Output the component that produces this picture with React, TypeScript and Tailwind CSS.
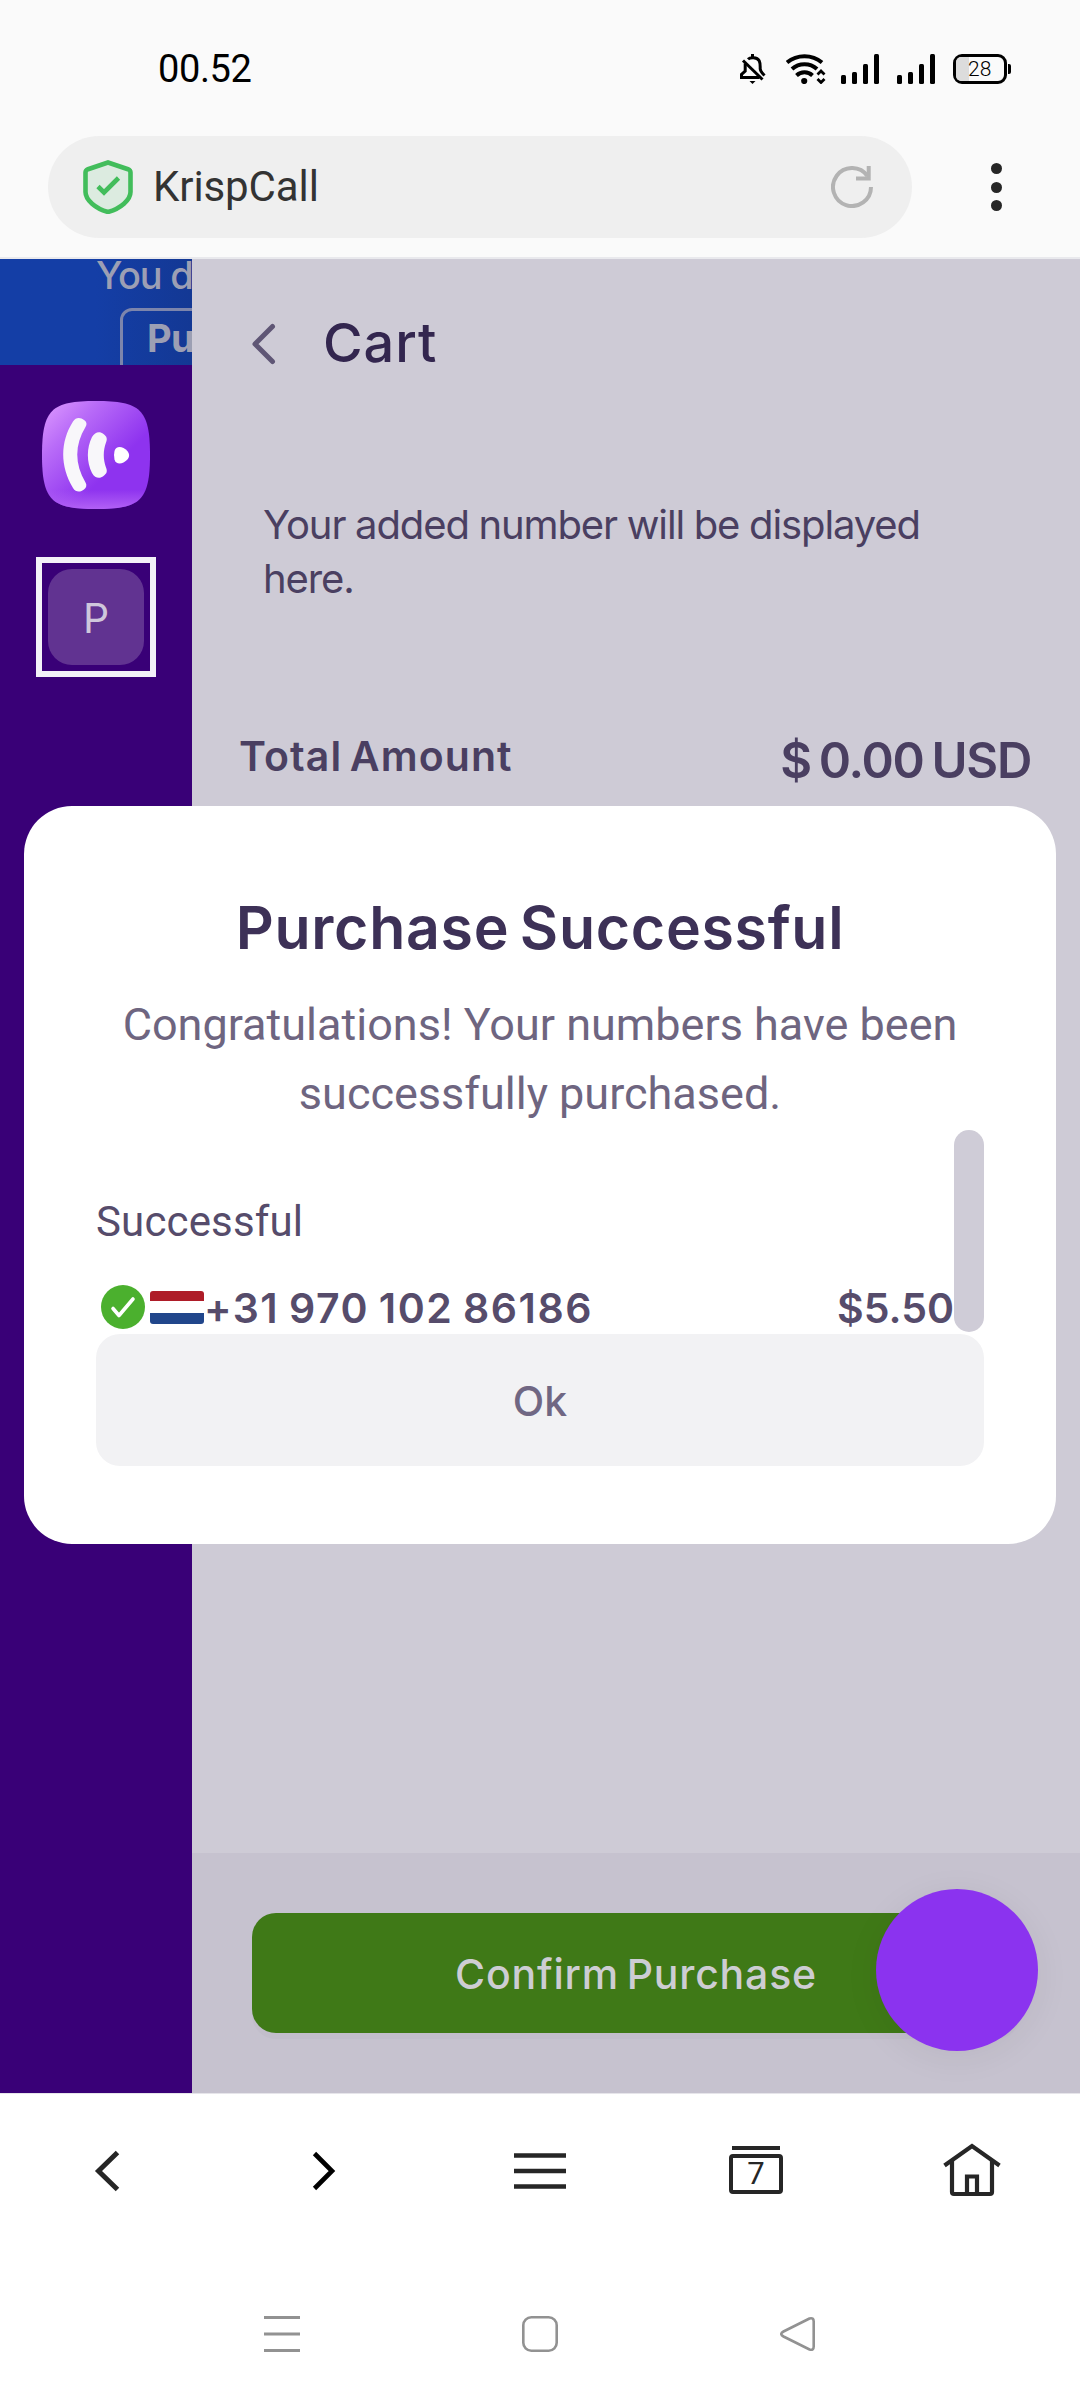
import React from 'react';

const SIGNAL_BARS = [
  { id: 1, className: 'h-[9px]' },
  { id: 2, className: 'h-[12px]' },
  { id: 3, className: 'h-[20px]' },
  { id: 4, className: 'h-[30px]' },
];

const PURCHASED = [{ id: 1, number: '+31 970 102 86186', price: '$5.50' }];

const Signal: React.FC = () => (
  <div className="flex h-[30px] items-end gap-[6px]">
    {SIGNAL_BARS.map((bar) => (
      <span key={bar.id} className={`w-[5px] rounded-[1.5px] bg-black ${bar.className}`} />
    ))}
  </div>
);

const StatusBar: React.FC = () => (
  <div className="flex h-[136px] items-center justify-between pt-[2px] pr-[69px] pl-[158px] font-['Roboto',sans-serif]">
    <span className="text-[38px] tracking-[-0.4px] text-black">00.52</span>
    <div className="flex items-center">
      {/* Muted bell */}
      <svg width="26" height="30" viewBox="0 0 26 30" fill="none" stroke="#000" strokeWidth="3">
        <path d="M3 6.5 22.5 25.5" />
        <path d="M8 5.2C10 3.2 17 2.6 19.2 6.8c1.2 2.4 1 5 1 8 0 2.4 1.3 3.6 4.3 6.7" />
        <path d="M5.2 9.5v7.5L1.5 20.5v3h18" />
        <path d="M12.5 0v4" />
        <path d="M9.5 27h6l-3 3z" fill="#000" stroke="none" />
      </svg>
      <svg className="ml-[20px]" width="40" height="30" viewBox="0 0 40 30" fill="none" stroke="#000" strokeWidth="4">
        <path d="M1 8.5C11 0 26 0 36 8.5" />
        <path d="M6 15C13 8.5 24 8.5 31 15" />
        <path d="M10.5 21.5c4.5-4.2 11.5-4.2 16 0" />
        <circle cx="18.2" cy="27" r="3.1" fill="#000" stroke="none" />
        <path d="m31.5 20.5 3.5-3.5 3.5 3.5M31.5 25l3.5 3.5 3.5-3.5" strokeWidth="2.8" />
      </svg>
      <div className="ml-[15px]"><Signal /></div>
      <div className="ml-[18px]"><Signal /></div>
      <div className="ml-[18px] flex h-[30px] w-[54px] items-center rounded-[9px] border-[3px] border-black">
        <span className="h-[24px] w-[13px] rounded-l-[5px] bg-[#dcdcdc]" />
        <span className="-ml-px text-[21px] leading-none font-light text-black">28</span>
      </div>
      <span className="ml-px h-[10px] w-[3px] rounded-r-[2px] bg-black" />
    </div>
  </div>
);

const AddressBar: React.FC = () => (
  <div className="flex h-[121px] items-start pl-[48px]">
    <div className="flex h-[102px] w-[864px] items-center rounded-full bg-[#efefef] pr-[39px] pl-[35px]">
      <svg width="50" height="54" viewBox="0 0 50 54" fill="none">
        <path
          d="M25 2.5 45 9.2q2.5 1 2.5 3.3V32c0 8-10 16.5-22.5 20C12.5 48.5 2.5 40 2.5 32V12.5q0-2.3 2.5-3.3z"
          fill="#dcebe0"
          stroke="#42bd5b"
          strokeWidth="4.6"
        />
        <path d="m15 26.5 6 6L35.5 18" stroke="#42bd5b" strokeWidth="4.6" />
      </svg>
      <span className="ml-[20px] font-['Roboto',sans-serif] text-[42px] leading-none tracking-[-0.1px] text-[#333]">KrispCall</span>
      <svg className="ml-auto" width="42" height="42" viewBox="0 0 42 42" fill="none" stroke="#b3b3b3" strokeWidth="4">
        <path d="M40 21A19 19 0 1 1 36.5 10" />
        <path d="M25 12.5h12.7V0" />
      </svg>
    </div>
    <div className="ml-[78.5px] flex h-[102px] flex-col items-center justify-center gap-[7.5px]">
      <span className="size-[11px] rounded-full bg-[#262626]" />
      <span className="size-[11px] rounded-full bg-[#262626]" />
      <span className="size-[11px] rounded-full bg-[#262626]" />
    </div>
  </div>
);

const Sidebar: React.FC = () => (
  <aside className="flex w-[192px] shrink-0 flex-col items-center bg-[#390077]">
    <div className="h-[106px] w-full overflow-hidden bg-linear-to-r from-[#143ea6] from-50% to-[#133894] whitespace-nowrap text-[#9c9fb4]">
      <p className="pl-[96px] text-[38px] leading-8 font-medium tracking-[-1.2px]">You d</p>
      <div className="mt-[17px] ml-[120px] h-[70px] w-[200px] rounded-[12px] border-[3px] border-[#7c85ac] pl-[24px] text-[38px] leading-[54px] font-bold tracking-[-0.5px]">
        Pu
      </div>
    </div>
    <svg className="mt-[36px]" width="108" height="108" viewBox="0 0 108 108">
      <defs>
        <linearGradient id="tile" x1="0" y1="0" x2="0.75" y2="0.75">
          <stop offset="0" stopColor="#e09dff" />
          <stop offset="0.35" stopColor="#b96cf8" />
          <stop offset="0.85" stopColor="#8e33ef" />
        </linearGradient>
        <linearGradient id="glow" x1="0" y1="0" x2="0" y2="1">
          <stop offset="0.82" stopColor="#b565f5" stopOpacity="0" />
          <stop offset="1" stopColor="#b565f5" stopOpacity="0.9" />
        </linearGradient>
      </defs>
      <path d="M54 0C98 0 108 8 108 54s-10 54-54 54S0 100 0 54 10 0 54 0z" fill="url(#tile)" />
      <path d="M54 0C98 0 108 8 108 54s-10 54-54 54S0 100 0 54 10 0 54 0z" fill="url(#glow)" />
      <path
        d="M31 20.5c3-5 8-4 11-1.5 3 2 3 4.5 1.5 7-11 18-11 37 0 55.5 1.5 2.5 1 5-1.5 7-3 2.5-8 3.5-11-1.5C18 65 18 41 31 20.5z"
        fill="#f8f7fa"
      />
      <path
        d="M50 36c3-5.5 8-6 11.5-3 3.5 2.5 4 5 2.5 8.5-3 8-3 17 0 25 1.5 3.5 1 6-2.5 8.5-3.5 3-8.5 2.5-11.5-3C44.5 61 44.5 47 50 36z"
        fill="#f8f7fa"
      />
      <path d="M72.5 50c1-4 5-5 9-3 7 4 8 10 0 14.5-4 2-8 1-9-3q-1-4.5 0-8.500z" fill="#fff" />
    </svg>
    <div className="mt-[48px] flex size-[120px] items-center justify-center border-[6px] border-[#f3f1f8]">
      <div className="flex size-[96px] items-center justify-center rounded-[24px] bg-[#613391] pt-[2px] text-[41px] leading-none text-[#cfc7dc]">P</div>
    </div>
  </aside>
);

const Cart: React.FC = () => (
  <main className="flex grow flex-col bg-[#cecbd6] text-[#4a3f61]">
    <div className="flex h-[166px] items-center pl-[60px]">
      <svg className="mt-[4px]" width="25" height="42" viewBox="0 0 25 42" fill="none" stroke="#5f5675" strokeWidth="5" strokeLinecap="round" strokeLinejoin="round">
        <path d="M20.5 3.5 3 21l17.5 17.5" />
      </svg>
      <h1 className="ml-[46px] text-[54px] font-medium tracking-[1px] text-[#33264f]">Cart</h1>
    </div>
    <p className="mt-[73px] w-[740px] pl-[71px] text-[40px] leading-[54px] tracking-[-1.1px] [word-spacing:-0.5px]">
      Your added number will be displayed here.
    </p>
    <div className="mt-[120px] flex items-start justify-between pr-[49px] pl-[47px] leading-[60px] font-semibold">
      <span className="text-[41px] tracking-[1.1px] [word-spacing:-4px]">Total Amount</span>
      <span className="mt-[5px] text-[49px] tracking-[-1.3px] [word-spacing:-3px]">$ 0.00 USD</span>
    </div>
    <div className="mt-auto h-[240px] bg-[#c6c2cf] px-[60px] pt-[60px]">
      <button className="h-[120px] w-full rounded-[24px] bg-[#3f7917] pt-[3px] text-[41px] font-medium tracking-[0.8px] [word-spacing:-4px] text-[#cdcdd3] shadow-[0_6px_0_#c2becb]">
        Confirm Purchase
      </button>
    </div>
  </main>
);

const SuccessDialog: React.FC = () => (
  <div className="absolute top-[547px] left-[24px] h-[738px] w-[1032px] rounded-[48px] bg-white px-[72px] pt-[88px] text-[#564c6b]">
    <h2 className="text-center text-[59px] leading-[68px] font-semibold tracking-[0.7px] [word-spacing:-5px] whitespace-nowrap text-[#3d3157]">
      Purchase Successful
    </h2>
    <p className="mt-[29px] text-center font-['Roboto',sans-serif] text-[45px] leading-[68.5px] text-[#6e6580]">
      Congratulations! Your numbers have been successfully purchased.
    </p>
    <div className="mt-[2px] flex h-[202px]">
      <div className="grow pt-[68px]">
        <p className="font-['Roboto',sans-serif] text-[42px] leading-[48px] tracking-[0.15px]">Successful</p>
        {PURCHASED.map((item) => (
          <div key={item.id} className="mt-[39px] flex h-[44px] items-center pl-[5px]">
            <svg width="44" height="44" viewBox="0 0 44 44" fill="none">
              <circle cx="22" cy="22" r="22" fill="#4bb02e" />
              <path d="m12 23.5 6 7L32 14" stroke="#fff" strokeWidth="3.6" strokeLinecap="round" strokeLinejoin="round" />
            </svg>
            <span className="ml-[5px] flex h-[33px] w-[54px] flex-col justify-between overflow-hidden rounded-[3px]">
              <span className="h-[10px] bg-[#ae1c28]" />
              <span className="h-[11px] bg-[#21468b]" />
            </span>
            <span className="pt-[2px] text-[41px] leading-[44px] font-semibold tracking-[1.5px] [word-spacing:-2px]">{item.number}</span>
            <span className="ml-auto pt-[2px] text-[41px] leading-[44px] font-semibold">{item.price}</span>
          </div>
        ))}
      </div>
      <div className="w-[30px] rounded-full bg-[#cfccd7]" />
    </div>
    <button className="mt-[2px] h-[132px] w-full rounded-[24px] bg-[#f2f2f4] pt-[3px] text-[41px] font-medium text-[#706783]">Ok</button>
  </div>
);

const BrowserNav: React.FC = () => (
  <nav className="grid h-[154px] grid-cols-5 items-center justify-items-center border-t border-[#e6e5ea]">
    <svg width="60" height="60" viewBox="0 0 60 60" fill="none" stroke="#262626" strokeWidth="5">
      <path d="M39.5 11.5 20.5 30l19 18.5" />
    </svg>
    <svg width="60" height="60" viewBox="0 0 60 60" fill="none" stroke="#000" strokeWidth="4.6">
      <path d="M20.5 12.5 38 30 20.5 47.5" />
    </svg>
    <svg width="60" height="60" viewBox="0 0 60 60" fill="none" stroke="#262626" strokeWidth="4.6">
      <path d="M4 14.5h52M4 30h52M4 45.5h52" />
    </svg>
    <div className="flex h-[60px] flex-col items-center pt-[5px]">
      <span className="h-[4px] w-[48px] bg-[#262626]" />
      <span className="mt-[4px] flex h-[40px] w-[54px] items-center justify-center rounded-[4px] border-4 border-[#262626] font-['Roboto',sans-serif] text-[31px] leading-none text-[#262626]">
        7
      </span>
    </div>
    <svg width="60" height="60" viewBox="0 0 60 60" fill="none" stroke="#262626" strokeWidth="4.2">
      <path d="M2.5 24.5 30 5l27.5 19.5" />
      <path d="M10 20v31q0 2 2 2h36q2 0 2-2V20" />
      <path d="M25 53V35.5h10V53" />
    </svg>
  </nav>
);

const SystemNav: React.FC = () => (
  <div className="flex grow items-start justify-center gap-[222px] pt-[69px]">
    <svg width="36" height="36" viewBox="0 0 36 36" fill="none" stroke="#929292" strokeWidth="3">
      <path d="M0 1.5h36M0 18h36M0 34.5h36" />
    </svg>
    <svg width="36" height="36" viewBox="0 0 36 36" fill="none" stroke="#929292" strokeWidth="2.6">
      <rect x="1.3" y="1.3" width="33.4" height="33.4" rx="8" />
    </svg>
    <svg width="36" height="36" viewBox="0 0 36 36" fill="none" stroke="#929292" strokeWidth="2.6">
      <path d="M29.5 2.5 3.5 15.5q-4.5 2.5 0 5l26 13q4.2 1.2 4.2-3v-25q0-4.2-4.2-3z" />
    </svg>
  </div>
);

const App: React.FC = () => {
  return (
    <div className="flex h-[2400px] w-[1080px] flex-col overflow-hidden bg-white font-['Inter',sans-serif]">
      <header className="h-[259px] border-b-2 border-[#e9e9ed] bg-[#fafafa]">
        <StatusBar />
        <AddressBar />
      </header>
      <div className="relative flex h-[1834px]">
        <Sidebar />
        <Cart />
        <SuccessDialog />
        {/* Chat launcher */}
        <div className="absolute right-[42px] bottom-[42px] size-[162px] rounded-full bg-[#8b33ef] shadow-[0_6px_36px_rgba(0,0,0,0.06)]" />
      </div>
      <BrowserNav />
      <SystemNav />
    </div>
  );
};

export default App;
